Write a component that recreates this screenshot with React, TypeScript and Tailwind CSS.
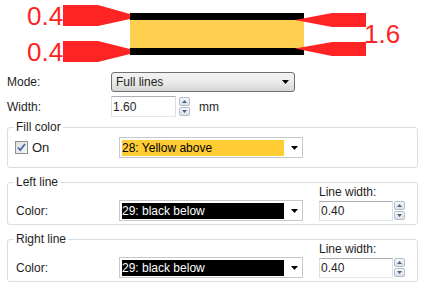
import type { ReactNode } from 'react'

const RED = '#ff2424'

function Diagram() {
  return (
    <svg width="425" height="70" className="block">
      <polygon points="63,5 98,5 130,14 130,19 98,26 63,26" fill={RED} />
      <polygon points="63,41 98,41 130,49 130,54 98,62 63,62" fill={RED} />
      <rect x="130" y="13" width="174" height="7" fill="#000" />
      <rect x="130" y="20" width="174" height="28" fill="#ffd04f" />
      <rect x="130" y="48" width="174" height="7" fill="#000" />
      <polygon points="366,13 332,13 295,20 332,27 366,27" fill={RED} />
      <polygon points="366,42 332,42 295,48.5 332,56 366,56" fill={RED} />
      <text x="27" y="25" fill={RED} fontSize="26" fontFamily="'Liberation Sans', Arial, sans-serif">
        0.4
      </text>
      <text x="27" y="61" fill={RED} fontSize="26" fontFamily="'Liberation Sans', Arial, sans-serif">
        0.4
      </text>
      <text x="364" y="43" fill={RED} fontSize="26" fontFamily="'Liberation Sans', Arial, sans-serif">
        1.6
      </text>
    </svg>
  )
}

function DownTri() {
  return (
    <svg width="7" height="4" aria-hidden>
      <path d="M0 0h7L3.5 4z" fill="#000" />
    </svg>
  )
}

function SpinBtn({ up }: { up?: boolean }) {
  return (
    <div className="flex h-[9px] w-[11px] items-center justify-center rounded-[2px] border border-[#b6bdc8] bg-gradient-to-b from-[#f5f7f9] to-[#dae0e8]">
      <svg width="5" height="3" aria-hidden>
        <path d={up ? 'M0 3h5L2.5 0z' : 'M0 0h5L2.5 3z'} fill="#4f6287" />
      </svg>
    </div>
  )
}

function Spinner() {
  return (
    <div className="flex flex-col gap-[1px]">
      <SpinBtn up />
      <SpinBtn />
    </div>
  )
}

function TextBox({ value, w, h }: { value: string; w: string; h: string }) {
  return (
    <div
      className={`flex items-center border border-x-[#dbdfe6] border-b-[#e3e9ef] border-t-[#abadb3] bg-white pl-[1px] ${w} ${h}`}
    >
      {value}
    </div>
  )
}

function ColorCombo({ fill, text }: { fill: string; text: string }) {
  return (
    <div className="flex h-[21px] w-[184px] items-center border border-[#c5c8ce] bg-white pl-[2px] pr-[4px]">
      <div className={`flex h-[16px] w-[162px] items-center ${fill}`}>{text}</div>
      <span className="ml-auto flex">
        <DownTri />
      </span>
    </div>
  )
}

function Group({ title, children, className }: { title: string; children: ReactNode; className: string }) {
  return (
    <fieldset className={`mx-[7px] rounded-[3px] border border-[#d5dfe5] ${className}`}>
      <legend className="ml-[6px] px-[2px] leading-[12px]">{title}</legend>
      {children}
    </fieldset>
  )
}

function LineGroup({ title, className }: { title: string; className: string }) {
  return (
    <Group title={title} className={`pb-[3px] ${className}`}>
      <div className="-mt-[2px] h-[12px] pl-[311px] leading-[12px]">Line width:</div>
      <div className="mt-[2px] flex items-center">
        <div className="w-[111px] pl-[8px]">Color:</div>
        <ColorCombo fill="bg-black text-white" text="29: black below" />
        <div className="ml-[16px] flex items-center gap-[1px]">
          <TextBox value="0.40" w="w-[74px]" h="h-[20px]" />
          <Spinner />
        </div>
      </div>
    </Group>
  )
}

export default function App() {
  return (
    <div className="h-[290px] w-[425px] overflow-hidden bg-white font-['Liberation_Sans',Arial,sans-serif] text-[12px] text-[#1e1e1e]">
      <Diagram />

      <div className="mt-[2px] flex h-[20px] items-center pl-[7px]">
        <div className="w-[104px]">Mode:</div>
        <div className="flex h-[20px] w-[184px] items-center rounded-[3px] border border-[#707070] bg-gradient-to-b from-[#f2f2f2] via-[#ebebeb] to-[#d5d5d5] pl-[4px] pr-[5px]">
          Full lines
          <span className="ml-auto flex">
            <DownTri />
          </span>
        </div>
      </div>

      <div className="mt-[4px] flex h-[21px] items-center pl-[7px]">
        <div className="w-[104px]">Width:</div>
        <TextBox value="1.60" w="w-[65px]" h="h-[21px]" />
        <div className="ml-[3px]">
          <Spinner />
        </div>
        <div className="ml-[9px]">mm</div>
      </div>

      <Group title="Fill color" className="mt-[4px] pb-[9px]">
        <div className="mt-[4px] flex items-center">
          <div className="flex w-[111px] items-center gap-[4px] pl-[7px]">
            <div className="flex h-[13px] w-[13px] items-center justify-center border border-[#8f8f8f] bg-gradient-to-br from-[#dcdcdc] to-[#f8f8f8]">
              <svg width="9" height="9" viewBox="0 0 9 9" aria-hidden>
                <path d="M1 4.5l2.3 2.6L8 1" fill="none" stroke="#4a66a6" strokeWidth="1.8" />
              </svg>
            </div>
            <span className="text-[13px]">On</span>
          </div>
          <ColorCombo fill="bg-[#ffcc33] text-black" text="28: Yellow above" />
        </div>
      </Group>

      <LineGroup title="Left line" className="mt-[8px]" />
      <LineGroup title="Right line" className="mt-[8px]" />
    </div>
  )
}
